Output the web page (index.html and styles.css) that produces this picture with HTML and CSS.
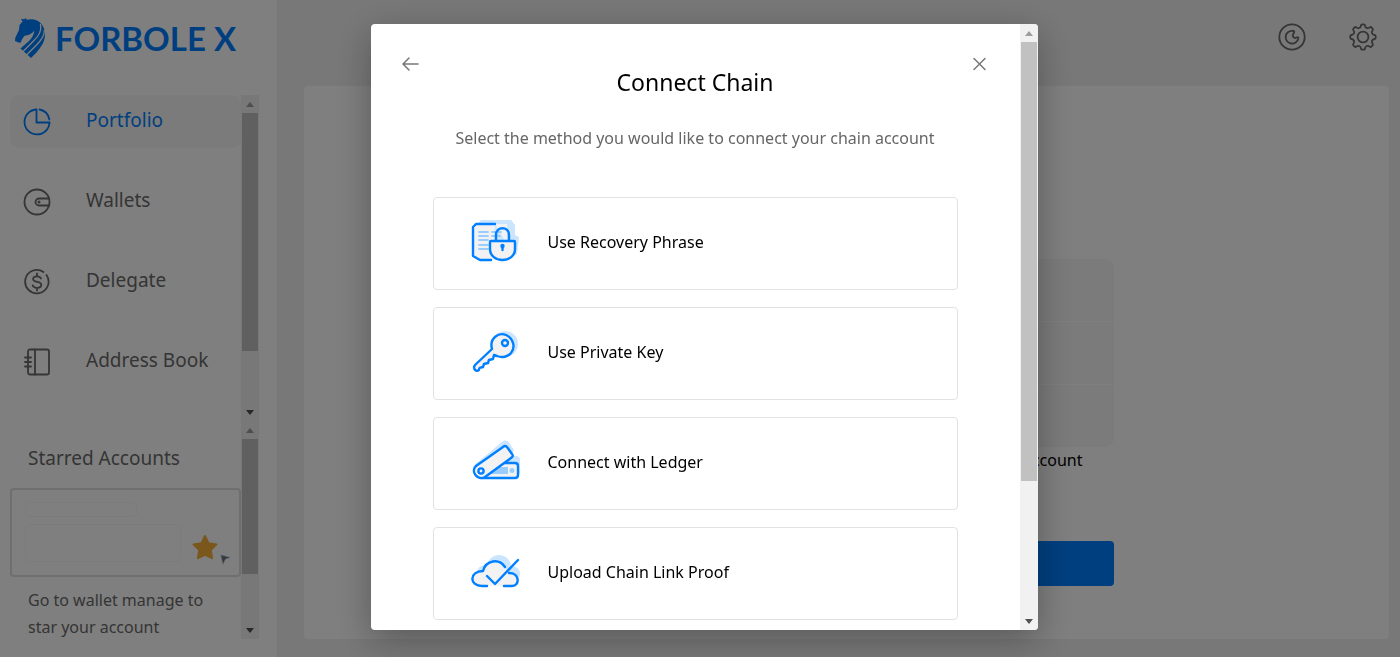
FILE: index.html
```html
<!DOCTYPE html>
<html lang="en">
<head>
<meta charset="utf-8">
<meta name="viewport" content="width=device-width, initial-scale=1">
<title>Forbole X</title>
<link rel="stylesheet" href="styles.css">
</head>
<body>
<div class="app">
  <aside class="sidebar">
    <a class="logo" href="#">
      <svg class="logo-mark" viewBox="0 0 32 40" aria-hidden="true">
        <path fill="currentColor" d="M7 .8 10 1.300 12 0 12.500 1.800C20 0 26 3 28.500 7.500 32 13 32 20 28 27 25 32 21 36 17 40L6.500 30.500 15 23C18 20 20 16.500 20.300 12.500 18 16 14.500 17.300 10.500 17.800L8.500 20.500 6.500 24.800 4.500 24.500 1 23 1.200 20 5 12 5.500 7 8.500 3.500Z"/>
        <path fill="none" stroke="#fff" stroke-width="1.300" d="M26.500 6.500C28 13 24 19 19 23.500L9.500 33M30.300 12.500C30.500 18 27 22.500 23 26.500L12.500 37"/>
      </svg>
      <span>FORBOLE X</span>
    </a>

    <div class="pane pane-nav">
      <nav class="nav">
        <a class="nav-item active" href="#">
          <svg viewBox="0 0 28 28" aria-hidden="true"><path d="M13 1.500A12.500 12.500 0 1 0 26.500 14.500H13.500V1.500M16.500 1.500A12.500 12.500 0 0 1 26.400 11.500"/></svg>
          <span>Portfolio</span>
        </a>
        <a class="nav-item" href="#">
          <svg viewBox="0 0 28 28" aria-hidden="true"><circle cx="14" cy="14" r="12.500"/><path d="M26 10.500H16a3.500 3.500 0 0 0 0 7h10"/><circle cx="16" cy="14" r=".6"/></svg>
          <span>Wallets</span>
        </a>
        <a class="nav-item" href="#">
          <svg viewBox="0 0 28 28" aria-hidden="true"><path d="M20.500 4A11.700 11.700 0 1 0 23.500 7M14 5.500v2.800m0 11.500v2.700M18 10.500c-.6-1.500-2-2.200-4-2.200-2.300 0-3.900 1-3.900 2.800 0 4.200 8.200 1.500 8.200 5.700 0 2-1.800 3-4.300 3-2.200 0-3.800-.8-4.300-2.500"/></svg>
          <span>Delegate</span>
        </a>
        <a class="nav-item" href="#">
          <svg viewBox="0 0 28 28" aria-hidden="true"><rect x="5" y="1.500" width="21" height="25" rx="2"/><path d="M12 1.500v25M2 9.500h6M2 14h6M2 18.500h6"/></svg>
          <span>Address Book</span>
        </a>
      </nav>
      <div class="scrollbar" aria-hidden="true">
        <span class="arrow up"></span>
        <div class="track"><div class="thumb thumb-nav"></div></div>
        <span class="arrow down"></span>
      </div>
    </div>

    <div class="pane pane-starred">
      <section class="starred">
        <h2>Starred Accounts</h2>
        <div class="star-card">
          <div class="placeholder">
            <span class="line short"></span>
            <span class="line tall"></span>
          </div>
          <svg class="star" viewBox="0 0 40 32" aria-hidden="true">
            <path fill="#f5b03a" stroke="#f5b03a" stroke-width="2" stroke-linejoin="round" d="m14 3 3.500 7.200 8 1.200-5.700 5.600 1.300 8.200L14 21.800l-7.100 3.400L8.200 17 2.500 11.400l8-1.200Z"/>
            <path fill="#68727c" stroke="#b5c5d2" stroke-width=".6" d="m30 22 9 2.500-4.500 1.500-2.500 5Z"/>
          </svg>
        </div>
        <p>Go to wallet manage to star your account</p>
      </section>
      <div class="scrollbar" aria-hidden="true">
        <span class="arrow up"></span>
        <div class="track"><div class="thumb thumb-starred"></div></div>
        <span class="arrow down"></span>
      </div>
    </div>
  </aside>

  <main class="main">
    <header class="topbar">
      <button type="button" aria-label="Toggle theme">
        <svg viewBox="0 0 28 28" aria-hidden="true"><circle cx="14" cy="14" r="12.700"/><path d="M14.500 7.800A6.400 6.400 0 1 0 20.300 15.500c.2-1.200-.8-1.600-1.700-1-2.400 1.400-4.900-1-3.400-3.500l1-1.700c.5-1-.4-1.700-1.700-1.500Z"/></svg>
      </button>
      <button type="button" aria-label="Settings">
        <svg viewBox="0 0 28 28" aria-hidden="true"><circle cx="14" cy="14" r="5.400"/><path d="M12 2.500q.2-1.200 1.200-1.200h1.600q1 0 1.200 1.200.3 2 1.700 2.500 1.400.6 3-.6 1-.7 1.700 0l1.200 1.200q.7.700 0 1.700-1.200 1.600-.6 3 .5 1.400 2.500 1.700 1.200.2 1.200 1.200v1.600q0 1-1.200 1.200-2 .3-2.500 1.700-.6 1.400.6 3 .7 1 0 1.700l-1.200 1.200q-.7.700-1.700 0-1.600-1.200-3-.6-1.400.5-1.700 2.500-.2 1.200-1.200 1.200h-1.600q-1 0-1.200-1.200-.3-2-1.700-2.500-1.400-.6-3 .6-1 .7-1.700 0l-1.200-1.200q-.7-.7 0-1.700 1.200-1.600.6-3Q4.500 16.300 2.500 16q-1.200-.2-1.200-1.200v-1.600q0-1 1.200-1.200 2-.3 2.500-1.700.6-1.400-.6-3-.7-1 0-1.700l1.200-1.200q.7-.7 1.700 0 1.600 1.200 3 .6Q11.700 4.500 12 2.500Z"/></svg>
      </button>
    </header>
    <section class="panel">
      <div class="empty">
        <div class="rows"><span></span><span></span><span></span></div>
        <p>account</p>
        <button type="button" class="primary" aria-label="Connect chain"></button>
      </div>
    </section>
  </main>
</div>

<div class="overlay">
  <div class="dialog" role="dialog" aria-modal="true" aria-labelledby="dialog-title">
    <div class="dialog-body">
      <div class="dialog-actions">
        <button type="button" aria-label="Back"><svg viewBox="0 0 18 18" aria-hidden="true"><path d="M16 9H1M7 3 1 9l6 6"/></svg></button>
        <button type="button" aria-label="Close"><svg viewBox="0 0 18 18" aria-hidden="true"><path d="m3 3.500 11 11m0-11-11 11"/></svg></button>
      </div>
      <h1 id="dialog-title">Connect Chain</h1>
      <p class="lead">Select the method you would like to connect your chain account</p>
      <div class="methods">
        <button type="button" class="method">
          <svg viewBox="0 0 52 52" aria-hidden="true">
            <path class="tint" d="M10 7 13 4h30l4 5v10l4 2-2 17-8 4H22Z"/>
            <path class="fill" d="M27 8H8L5 11v29l7 4h13M27 8h12v20"/>
            <path d="M27 8H8L5 11v29l7 4h11"/>
            <path class="soft" d="M11 16h9m4 0h9M11 20h9m4 0h8M11 24h9M11 29h9M11 33h9"/>
            <path d="M28 24v-5c0-9 13-9 13 0v5"/>
            <path class="outlined" d="M23 25h23q1 0 1 1v7c0 7-6 11-12.500 11S22 40 22 33v-7q0-1 1-1Z"/>
            <path d="M34.500 31v3"/><circle cx="34.500" cy="30" r="1"/>
          </svg>
          <span>Use Recovery Phrase</span>
        </button>
        <button type="button" class="method">
          <svg viewBox="0 0 52 52" aria-hidden="true">
            <circle class="tint" cx="37" cy="18" r="13"/>
            <path class="outlined" d="M24 23C21 12 31 6 38 9c7 3 10 12 5 18-3 4-9 5-14 3l-3-1-1 4-4 1-1 3-4 1-1 3c-3 1-4 0-4 3-2 2-5 0-5-3l1-2Z"/>
            <circle cx="37" cy="17" r="3"/>
          </svg>
          <span>Use Private Key</span>
        </button>
        <button type="button" class="method">
          <svg viewBox="0 0 52 52" aria-hidden="true">
            <path class="tint" d="M5 30 34 6c3-3 6-1 8 2l4 6-3 6h5q4 0 4 4v14L13 43 6 38Z"/>
            <path class="outlined" d="M29 27h18q3 0 3 3v9q0 3-3 3H14Z"/>
            <path class="block" d="M28 31h12v7H21Z"/><circle class="block" cx="44" cy="34.500" r="2.500"/>
            <path class="outlined" d="M8 30 35 11q2-2 4 0l5 7q2 2-1 4L17 41c-7 4-15-5-9-11Z"/>
            <circle cx="13" cy="35" r="2.600"/>
          </svg>
          <span>Connect with Ledger</span>
        </button>
        <button type="button" class="method">
          <svg viewBox="0 0 52 52" aria-hidden="true">
            <circle class="tint" cx="31" cy="21" r="12"/><circle class="tint" cx="17" cy="27" r="8"/><circle class="tint" cx="44" cy="28" r="8"/>
            <path class="fill" d="M13 40C1 38 3 24 15 25 18 14 33 12 38 23l4 4c11 2 9 14-1 13Z"/>
            <path d="M19 40h-5C1 40 1 25 15 25 18 14 31 12 37 21M41 27c11 0 11 13 3 13h-8M50 14 27 38l-8-8"/>
          </svg>
          <span>Upload Chain Link Proof</span>
        </button>
      </div>
    </div>
    <div class="scrollbar" aria-hidden="true">
      <span class="arrow up"></span>
      <div class="track"><div class="thumb thumb-dialog"></div></div>
      <span class="arrow down"></span>
    </div>
  </div>
</div>
</body>
</html>
```

FILE: styles.css
```css
* { box-sizing: border-box; }

html, body { height: 100%; }

body {
  margin: 0;
  overflow: hidden;
  background: #f1f1f1;
  color: #000;
  font-family: "Noto Sans", sans-serif;
  font-size: 16px;
}

h1, h2, p { margin: 0; font-weight: 400; }

a { color: inherit; text-decoration: none; }

button {
  padding: 0;
  border: 0;
  background: none;
  color: inherit;
  font: inherit;
}

svg {
  display: block;
  fill: none;
  stroke: currentColor;
  stroke-width: 1.8;
  stroke-linecap: round;
  stroke-linejoin: round;
}

.app {
  display: grid;
  grid-template-columns: 277px 1fr;
  height: 100%;
}

/* Sidebar */
.sidebar {
  display: flex;
  flex-direction: column;
  min-height: 0;
  padding: 0 18px 18px 10px;
  background: #fff;
  color: #6a6a6a;
}

.logo {
  display: flex;
  flex: none;
  align-items: center;
  gap: 9px;
  height: 95px;
  padding: 0 0 19px 4px;
  color: #007fff;
  font: 700 33px/40px Lato, sans-serif;
  white-space: nowrap;
}

.logo-mark { width: 32px; height: 40px; stroke: none; }

.pane { display: flex; flex: none; overflow: hidden; }

.pane-nav { flex: 1; min-height: 0; }

.pane-starred { height: 218px; }

.nav {
  display: flex;
  flex: 1;
  flex-direction: column;
  gap: 27px;
  overflow: hidden;
}

.nav-item {
  display: flex;
  flex: none;
  align-items: center;
  gap: 35px;
  height: 53px;
  padding: 0 13px;
  border-radius: 9px;
  font-size: 19px;
  line-height: 26px;
  white-space: nowrap;
}

.nav-item svg { flex: none; width: 28px; height: 28px; }
.nav-item span { padding-bottom: 3px; }
.nav-item.active { background: #f6f6f6; color: #007fff; }

.starred { flex: 1; padding-top: 22px; }

.starred h2 {
  padding-left: 18px;
  font-size: 19px;
  line-height: 30px;
}

.star-card {
  display: flex;
  align-items: flex-end;
  justify-content: space-between;
  height: 89px;
  margin-top: 15px;
  padding: 12px 8px 10px 13px;
  border: 2px solid #dedede;
  border-radius: 4px;
}

.placeholder { display: flex; flex-direction: column; gap: 7px; margin-bottom: 3px; }
.line { border: 1px solid #f6f6f6; border-radius: 4px; }
.short { width: 112px; height: 15px; }
.tall { width: 156px; height: 38px; }
.star { width: 40px; height: 32px; stroke: none; }

.starred p {
  padding: 10px 18px 0;
  line-height: 27px;
}

/* Scrollbars */
.scrollbar {
  display: flex;
  flex: none;
  flex-direction: column;
  width: 18px;
  background: #f1f1f1;
}

.arrow {
  display: grid;
  flex: none;
  place-items: center;
  height: 18px;
}

.arrow::before {
  content: "";
  border: 4px solid transparent;
}

.up::before { border-top: 0; border-bottom: 5px solid #9d9d9d; }
.down::before { border-bottom: 0; border-top: 5px solid #505050; }
.track { flex: 1; min-height: 0; padding: 0 1px; }
.thumb { background: #c1c1c1; }
.thumb-nav { height: 82%; }
.thumb-starred { height: 74%; }
.thumb-dialog { height: 77%; }

/* Main area */
.main {
  display: flex;
  flex-direction: column;
  min-width: 0;
  padding: 0 11px 18px 27px;
}

.topbar {
  display: flex;
  flex: none;
  align-items: center;
  justify-content: flex-end;
  gap: 43px;
  height: 86px;
  padding: 0 12px 12px;
  color: #6a6a6a;
}

.topbar svg { width: 28px; height: 28px; }

.panel {
  display: flex;
  flex: 1;
  flex-direction: column;
  align-items: center;
  min-height: 0;
  padding-top: 173px;
  border-radius: 4px;
  background: #fff;
}

.empty { width: 534px; }

.rows {
  display: grid;
  gap: 1px;
  overflow: hidden;
  border-radius: 9px;
}

.rows span { height: 62px; background: #f6f6f6; }

.empty p {
  padding-right: 31px;
  line-height: 27px;
  text-align: right;
}

.primary {
  width: 100%;
  height: 45px;
  margin-top: 67px;
  border-radius: 4px;
  background: #007fff;
}

/* Dialog */
.overlay {
  position: fixed;
  inset: 0;
  display: flex;
  justify-content: center;
  padding: 24px 0 27px 8px;
  background: rgba(0, 0, 0, 0.5);
}

.dialog {
  display: flex;
  width: 667px;
  overflow: hidden;
  border-radius: 4px;
  background: #fff;
  box-shadow: 0 10px 36px rgba(0, 0, 0, 0.3);
}

.dialog-body { flex: 1; overflow: hidden; }

.dialog-actions {
  display: flex;
  justify-content: space-between;
  padding: 31px 31px 0;
  color: #777;
}

.dialog-actions svg { width: 18px; height: 18px; stroke-width: 1.5; }

h1 {
  font-size: 23px;
  line-height: 26px;
  margin-top: -4px;
  text-align: center;
}

.lead {
  margin-top: 30px;
  color: #666;
  line-height: 26px;
  text-align: center;
}

.methods {
  display: grid;
  gap: 17px;
  padding: 46px 62px;
}

.method {
  display: flex;
  align-items: center;
  gap: 28px;
  height: 93px;
  padding: 0 34px 3px;
  border: 1px solid #e2e2e2;
  border-radius: 4px;
  text-align: left;
}

.method svg {
  width: 52px;
  height: 52px;
  stroke: #007fff;
  stroke-width: 2.4;
}

.method .tint { fill: #cce5ff; stroke: none; }
.method .fill { fill: #f2f2f2; stroke: none; }
.method .outlined { fill: #f2f2f2; }
.method .block { fill: #99ccff; stroke: none; }
.method .soft { stroke: #99ccff; stroke-width: 1.8; }
```
